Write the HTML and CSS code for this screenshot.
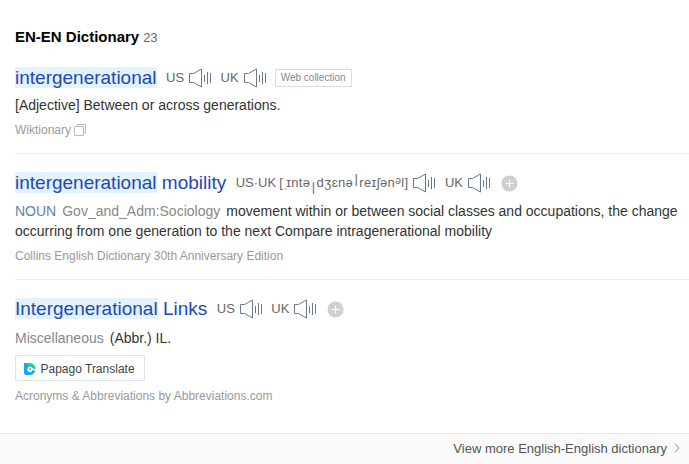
FILE: index.html
```
<!DOCTYPE html>
<html lang="en">
<head>
<meta charset="utf-8">
<title>EN-EN Dictionary</title>
<link rel="stylesheet" href="styles.css">
</head>
<body>
<svg class="defs" aria-hidden="true">
  <symbol id="speaker" viewBox="0 0 24 20"><path d="M5.500 14.500H1.500v-9h4L13.500 1v18z"/><path d="M16.500 7v7M19.500 4v12M22.500 5v10"/></symbol>
  <symbol id="plus" viewBox="0 0 17 17"><circle cx="8.5" cy="8.5" r="8.5"/><path d="M4.5 8.5h8M8.5 4.5v8"/></symbol>
</svg>
<main class="page">
  <h1 class="heading">EN-EN Dictionary <span class="count">23</span></h1>

  <article class="entry first">
    <div class="row">
      <a class="word"><mark>intergenerational</mark></a>
      <span class="accent">US</span><svg class="speaker"><use href="#speaker"/></svg>
      <span class="accent next">UK</span><svg class="speaker"><use href="#speaker"/></svg>
      <span class="tag">Web collection</span>
    </div>
    <p class="meaning">[Adjective] Between or across generations.</p>
    <p class="source">Wiktionary <svg class="copy" viewBox="0 0 12 12"><path d="M3 2.500V.5h8.500v8.500h-2M.5 2.500h9v9h-9z"/></svg></p>
  </article>

  <article class="entry second">
    <div class="row">
      <a class="word"><mark>intergenerational</mark> mobility</a>
      <span class="accent">US·UK</span><span class="ipa">[<i class="faint">ˌ</i>ɪntə<i class="low">|</i>dʒɛnə<i class="high">|</i>reɪʃən<b>ᵊ</b>l]</span><svg class="speaker"><use href="#speaker"/></svg>
      <span class="accent next">UK</span><svg class="speaker"><use href="#speaker"/></svg>
      <svg class="plus"><use href="#plus"/></svg>
    </div>
    <p class="meaning"><span class="pos">NOUN</span><span class="field">Gov_and_Adm:Sociology</span><span>movement within or between social classes and occupations, the change occurring from one generation to the next Compare intragenerational mobility</span></p>
    <p class="source">Collins English Dictionary 30th Anniversary Edition</p>
  </article>

  <article class="entry third">
    <div class="row">
      <a class="word"><mark>Intergenerational</mark> Links</a>
      <span class="accent">US</span><svg class="speaker"><use href="#speaker"/></svg>
      <span class="accent next">UK</span><svg class="speaker"><use href="#speaker"/></svg>
      <svg class="plus"><use href="#plus"/></svg>
    </div>
    <p class="meaning"><span class="field">Miscellaneous</span><span>(Abbr.) IL.</span></p>
    <a class="papago"><svg class="logo" viewBox="0 0 12 12"><path fill="#16a5f2" d="M0 0h6l5 8.500A6 6 0 0 1 6 12H2.500Q0 12 0 9.500z"/><path fill="#20cf78" d="M1.500 0H5.500A6 6 0 0 1 11.500 6.800L8 5.500 5 3z"/><path fill="#fff" d="M3.500 5.800a2.500 2.500 0 0 1 4.800-.8L12 6.800 8.300 7.600a2.500 2.500 0 0 1-4.800-1.800z"/><circle cx="6.200" cy="6" r=".8" fill="#357"/></svg>Papago Translate</a>
    <p class="source">Acronyms &amp; Abbreviations by Abbreviations.com</p>
  </article>

  <footer class="more">View more English-English dictionary<svg class="chevron" viewBox="0 0 6 10"><path d="M1 .7 5 5 1 9.300"/></svg></footer>
</main>
</body>
</html>
```
FILE: styles.css
```
* { box-sizing: border-box; }
body { margin: 0; background: #fff; font-family: "Liberation Sans", Arial, sans-serif; color: #333; }
.defs { display: none; }
.page { height: 464px; display: flex; flex-direction: column; overflow: hidden; }
.heading { margin: 27px 15px 0; font-size: 15px; line-height: 20px; color: #000; }
.count { font-size: 13px; font-weight: 400; color: #666; letter-spacing: -.4px; }
.entry { margin: 0 0 0 15px; }
.first { height: 106px; padding-top: 18px; }
.second { height: 126px; border-top: 1px solid #eee; padding-top: 17px; margin-top: -1px; }
.third { height: 154px; border-top: 1px solid #eee; padding-top: 17px; }
.row { display: flex; align-items: center; height: 24px; }
.word { font-size: 19px; line-height: 24px; color: #2348b5; margin-right: 9.5px; white-space: nowrap; }
.word mark { background: #e3f3fd; color: inherit; }
.accent, .ipa { font-size: 13px; line-height: 20px; color: #666; white-space: nowrap; }
.next { margin-left: 8.5px; }
.speaker { flex: none; width: 24px; height: 20px; margin-left: 4px; fill: none; stroke: #68788f; stroke-width: 1; }
.tag { margin-left: 8px; height: 18px; border: 1px solid #ddd; padding: 0 5px; font-size: 10px; line-height: 16px; color: #888; }
.ipa { margin-left: 3px; letter-spacing: .4px; }
.ipa i { display: inline-block; font-style: normal; letter-spacing: 0; line-height: 0; text-align: center; }
.ipa b { font-weight: 400; font-size: 15px; line-height: 0; }
.faint { width: 3px; color: #777; }
.low { width: 6px; vertical-align: -4px; }
.high { width: 6px; vertical-align: 4px; }
.plus { width: 17px; height: 17px; margin-left: 9.5px; fill: #d0d0d0; stroke: #fff; }
.meaning { margin: 5px 0 0; font-size: 14px; line-height: 20px; }
.second .meaning { margin-top: 6px; }
.third .meaning { margin-top: 7px; }
.pos { color: #6580aa; margin-right: 6px; }
.field { color: #888; margin-right: 6px; }
.source { display: flex; align-items: center; margin: 7px 0 0; font-size: 12px; line-height: 16px; color: #999; }
.copy { width: 12px; height: 12px; margin-left: 3px; fill: none; stroke: #bbb; }
.papago { display: flex; align-items: center; width: 130px; height: 26px; margin-top: 7px; border: 1px solid #dfe5e8; padding: 1px 0 0 8px; font-size: 12px; color: #444; }
.logo { width: 12px; height: 12px; margin-right: 4.5px; }
.more { margin-top: auto; height: 31px; display: flex; justify-content: flex-end; align-items: center; padding: 0 9px 2px 0; border-top: 1px solid #e8e8e8; background: #fafafa; font-size: 13px; color: #555; }
.chevron { width: 6px; height: 10px; margin-left: 7px; fill: none; stroke: #888; }
```
